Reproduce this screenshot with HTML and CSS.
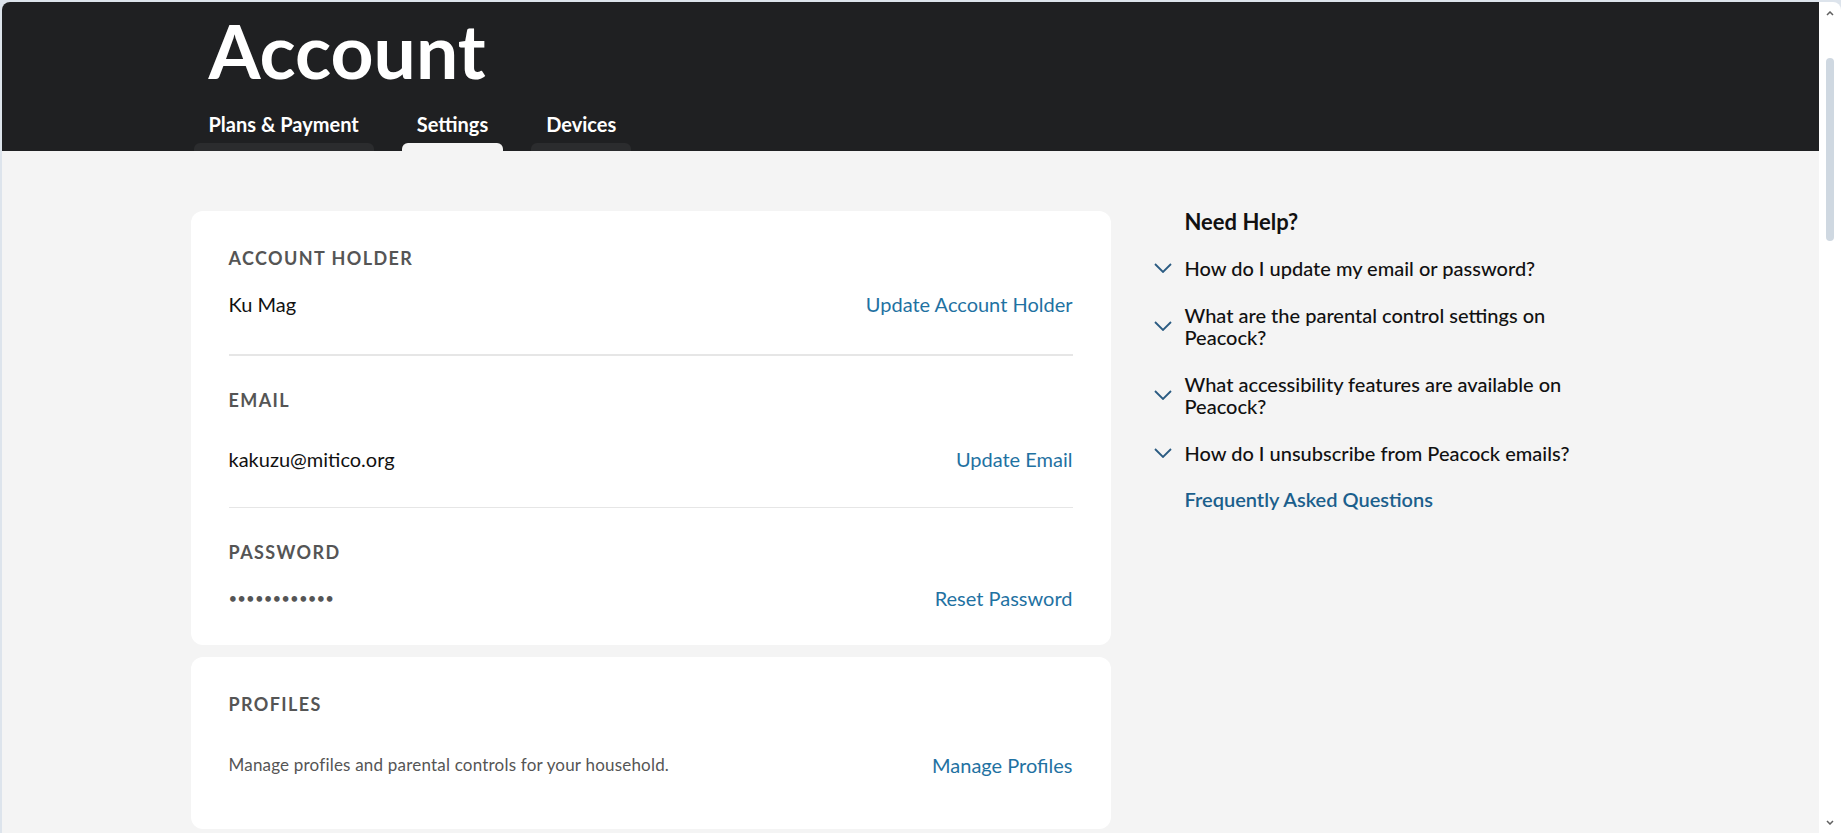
FILE: index.html
```html
<!DOCTYPE html>
<html>

<head>
    <link rel="stylesheet" href="styles.css">
</head>

<body>
    <div class="window">
        <div class="page">
            <header class="masthead">
                <div class="container">
                    <h1 class="title">Account</h1>
                    <nav class="tabs">
                        <a class="tab"><span class="tab-label">Plans &amp; Payment</span><span class="tab-bar"></span></a>
                        <a class="tab active"><span class="tab-label">Settings</span><span class="tab-bar"></span></a>
                        <a class="tab"><span class="tab-label">Devices</span><span class="tab-bar"></span></a>
                    </nav>
                </div>
            </header>

            <main class="container content">
                <div class="settings">
                    <section class="card">
                        <div class="field field-first">
                            <h2 class="label">ACCOUNT HOLDER</h2>
                            <div class="row">
                                <span class="value">Ku Mag</span>
                                <a class="link">Update Account Holder</a>
                            </div>
                        </div>
                        <div class="field field-mid">
                            <h2 class="label">EMAIL</h2>
                            <div class="row row-wide">
                                <span class="value">kakuzu@mitico.org</span>
                                <a class="link">Update Email</a>
                            </div>
                        </div>
                        <div class="field field-last">
                            <h2 class="label">PASSWORD</h2>
                            <div class="row">
                                <span class="value dots">&bull;&bull;&bull;&bull;&bull;&bull;&bull;&bull;&bull;&bull;&bull;&bull;</span>
                                <a class="link">Reset Password</a>
                            </div>
                        </div>
                    </section>
                    <section class="card card-profiles">
                        <h2 class="label">PROFILES</h2>
                        <div class="row row-profiles">
                            <span class="note">Manage profiles and parental controls for your household.</span>
                            <a class="link">Manage Profiles</a>
                        </div>
                    </section>
                </div>

                <aside class="help">
                    <h3 class="help-title">Need Help?</h3>
                    <ul class="faq">
                        <li class="faq-item">
                            <svg class="chevron" viewBox="0 0 18 10"><path d="M1 1l8 8 8-8" /></svg>
                            <span class="faq-text">How do I update my email or password?</span>
                        </li>
                        <li class="faq-item">
                            <svg class="chevron" viewBox="0 0 18 10"><path d="M1 1l8 8 8-8" /></svg>
                            <span class="faq-text">What are the parental control settings on Peacock?</span>
                        </li>
                        <li class="faq-item">
                            <svg class="chevron" viewBox="0 0 18 10"><path d="M1 1l8 8 8-8" /></svg>
                            <span class="faq-text">What accessibility features are available on Peacock?</span>
                        </li>
                        <li class="faq-item">
                            <svg class="chevron" viewBox="0 0 18 10"><path d="M1 1l8 8 8-8" /></svg>
                            <span class="faq-text">How do I unsubscribe from Peacock emails?</span>
                        </li>
                    </ul>
                    <a class="faq-link">Frequently Asked Questions</a>
                </aside>
            </main>
        </div>

        <div class="scrollbar">
            <svg class="arrow" viewBox="0 0 8 5"><path d="M1 4l3-3 3 3" /></svg>
            <span class="thumb"></span>
            <span class="track"></span>
            <svg class="arrow" viewBox="0 0 8 5"><path d="M1 1l3 3 3-3" /></svg>
        </div>
    </div>
</body>

</html>
```

FILE: styles.css
```css
* {
    box-sizing: border-box;
}

html,
body {
    margin: 0;
    height: 100%;
}

body {
    background-color: #dde4ec;
    font-family: Lato, "Noto Sans", sans-serif;
    overflow: hidden;
}

.window {
    display: flex;
    height: 100vh;
    padding: 2px 0 0 2px;
}

.page {
    flex: 1;
    background-color: #f4f4f4;
    border-top-left-radius: 8px;
    overflow: hidden;
}

.container {
    width: 1440px;
    margin: 0 auto;
}

/* header */
.masthead {
    background-color: #1f2022;
    padding-top: 12px;
}

.title {
    margin: 0;
    padding-left: 18px;
    font-size: 75px;
    line-height: 72px;
    font-weight: 700;
    color: #fff;
}

.tabs {
    display: flex;
    gap: 28px;
    margin-top: 26px;
    padding-left: 3px;
}

.tab {
    display: flex;
    flex-direction: column;
    color: #fff;
    font-size: 20px;
    line-height: 24px;
    font-weight: 700;
}

.tab-label {
    padding: 0 15px;
    text-align: center;
}

.tab-bar {
    height: 8px;
    margin-top: 7px;
    background-color: #2b2c2e;
    border-radius: 6px 6px 0 0;
}

.tab.active .tab-bar {
    background-color: #f4f4f4;
}

/* content */
.content {
    display: flex;
    align-items: flex-start;
    gap: 43px;
    padding-top: 60px;
}

.settings {
    width: 920px;
    display: flex;
    flex-direction: column;
    gap: 12px;
}

.card {
    background-color: #fff;
    border-radius: 12px;
    padding: 37px 38px 35px;
}

.label {
    margin: 0;
    font-size: 18px;
    line-height: 20px;
    font-weight: 700;
    letter-spacing: 1.4px;
    color: #555;
}

.field-first {
    padding-bottom: 38px;
    border-bottom: 2px solid #e6e6e6;
}

.field-mid {
    padding: 34px 0 36px;
    border-bottom: 1px solid #e6e6e6;
}

.field-last {
    padding-top: 34px;
}

.row {
    display: flex;
    justify-content: space-between;
    align-items: center;
    margin-top: 24px;
    font-size: 20px;
    line-height: 24px;
}

.row-wide {
    margin-top: 37px;
}

.value {
    color: #111;
}

.dots {
    font-size: 15px;
    color: #555;
    letter-spacing: 0.1px;
}

.link {
    color: #1f72a2;
}

.card-profiles {
    padding-bottom: 52px;
}

.row-profiles {
    margin-top: 39px;
}

.note {
    font-size: 17px;
    letter-spacing: 0.2px;
    color: #555;
}

/* help */
.help {
    width: 460px;
    padding-top: 1px;
}

.help-title {
    margin: 0;
    padding-left: 31px;
    font-size: 22px;
    line-height: 20px;
    font-weight: 700;
    color: #111;
}

.faq {
    list-style: none;
    margin: 25px 0 0;
    padding: 0;
    display: flex;
    flex-direction: column;
    gap: 25px;
}

.faq-item {
    display: flex;
    align-items: center;
    gap: 13px;
    font-size: 20px;
    line-height: 22px;
    font-weight: 500;
    color: #111;
}

.faq-text {
    width: 400px;
}

.chevron {
    width: 18px;
    height: 10px;
    flex: none;
    fill: none;
    stroke: #2a5b82;
    stroke-width: 1.8;
}

.faq-link {
    display: block;
    margin-top: 24px;
    padding-left: 31px;
    font-size: 20px;
    line-height: 22px;
    font-weight: 600;
    color: #1b5f8c;
}

/* scrollbar */
.scrollbar {
    width: 22px;
    background-color: #fff;
    border-top-right-radius: 8px;
    display: flex;
    flex-direction: column;
    align-items: center;
    padding: 9px 0 8px;
}

.arrow {
    width: 8px;
    height: 5px;
    fill: none;
    stroke: #606060;
    stroke-width: 1.5;
}

.thumb {
    width: 8px;
    height: 183px;
    margin-top: 42px;
    background-color: #cfd8e1;
    border-radius: 4px;
}

.track {
    flex: 1;
}
```
